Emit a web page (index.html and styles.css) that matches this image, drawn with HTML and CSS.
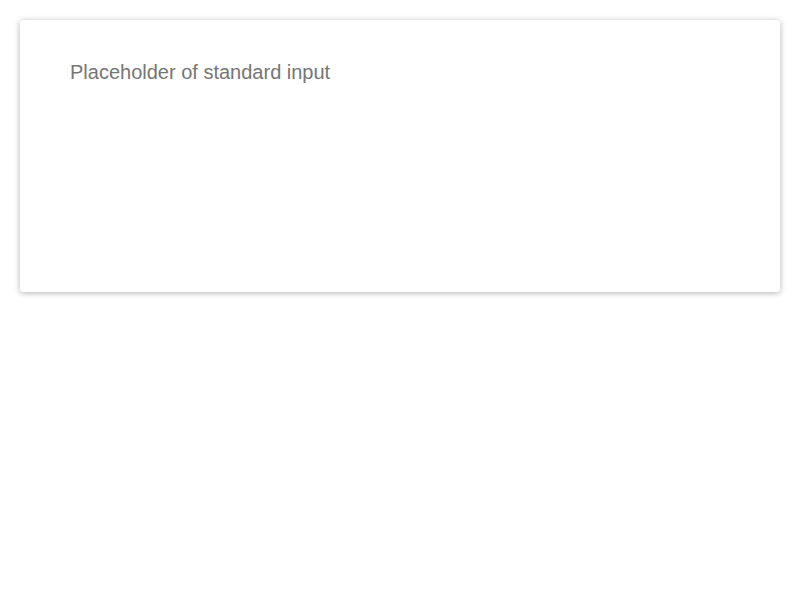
FILE: index.html
```html
<!DOCTYPE html>
<html>
<head>
<meta charset="utf-8">
<link rel="stylesheet" href="styles.css">
</head>
<body>
<div class="card">
  <textarea class="field" placeholder="Placeholder of standard input"></textarea>
</div>
</body>
</html>
```
FILE: styles.css
```css
html, body { margin: 0; padding: 0; background: #fff; }
body { padding: 20px; font-family: "Liberation Sans", Arial, sans-serif; }
.card {
  height: 272px;
  background: #fff;
  border-radius: 3px;
  box-shadow: 0 1px 6px rgba(0,0,0,0.3);
  box-sizing: border-box;
  padding: 40px 50px;
}
.field {
  display: block;
  width: 100%;
  height: 100%;
  border: none;
  outline: none;
  resize: none;
  padding: 0;
  margin: 0;
  font-family: "Liberation Sans", Arial, sans-serif;
  font-size: 20px;
  line-height: 24px;
  color: #333;
  background: transparent;
}
.field::placeholder { color: #757575; opacity: 1; }
```
